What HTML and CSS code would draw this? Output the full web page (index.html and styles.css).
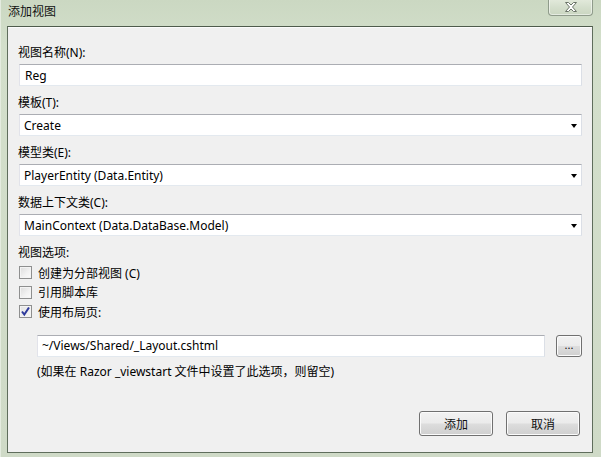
FILE: index.html
```html
<!DOCTYPE html>
<html>
<head>
<meta charset="utf-8">
<link rel="stylesheet" href="styles.css">
</head>
<body>
<div class="window">
  <div class="titlebar">
    <span class="title">添加视图</span>
    <div class="close">
      <svg width="16" height="12" viewBox="0 0 16 12"><path d="M2.5 1.5 L5.5 1.5 L8 4 L10.5 1.5 L13.5 1.5 L9.5 6 L13.5 10.5 L10.5 10.5 L8 8 L5.5 10.5 L2.5 10.5 L6.5 6 Z" fill="#fff" stroke="#6b7468" stroke-width="1" stroke-linejoin="round"/></svg>
    </div>
  </div>
  <div class="client">
    <div class="group">
      <div class="label">视图名称(N):</div>
      <div class="field">Reg</div>
    </div>
    <div class="group">
      <div class="label">模板(T):</div>
      <div class="field select"><span>Create</span><i class="arrow"></i></div>
    </div>
    <div class="group">
      <div class="label">模型类(E):</div>
      <div class="field select"><span>PlayerEntity (Data.Entity)</span><i class="arrow"></i></div>
    </div>
    <div class="group">
      <div class="label">数据上下文类(C):</div>
      <div class="field select"><span>MainContext (Data.DataBase.Model)</span><i class="arrow"></i></div>
    </div>
    <div class="label options">视图选项:</div>
    <div class="check"><span class="box"></span><span>创建为分部视图 (C)</span></div>
    <div class="check"><span class="box"></span><span>引用脚本库</span></div>
    <div class="check"><span class="box checked"><svg width="11" height="11" viewBox="0 0 11 11"><path d="M2 5.5 L4.3 8.5 L9 1.5" fill="none" stroke="#2e3a9c" stroke-width="2"/></svg></span><span>使用布局页:</span></div>
    <div class="layout-row">
      <div class="field layout">~/Views/Shared/_Layout.cshtml</div>
      <div class="btn small">...</div>
    </div>
    <div class="note">(如果在 Razor _viewstart 文件中设置了此选项，则留空)</div>
    <div class="actions">
      <div class="btn">添加</div>
      <div class="btn">取消</div>
    </div>
  </div>
</div>
</body>
</html>
```
FILE: styles.css
```css
html, body {
  margin: 0;
  padding: 0;
}
body {
  width: 601px;
  height: 457px;
  overflow: hidden;
  background: #cfdbc6;
  font-family: "Noto Sans", "Noto Sans CJK SC", sans-serif;
  font-size: 12px;
  color: #000;
}
.window {
  width: 601px;
  height: 457px;
  display: flex;
  flex-direction: column;
  background: linear-gradient(180deg, #cbd8c2 0%, #d3dfcb 10%, #cfdac7 100%);
  box-shadow: inset 1px 0 0 #e4ebdf;
}
.titlebar {
  height: 26px;
  display: flex;
  align-items: flex-start;
  justify-content: space-between;
  flex-shrink: 0;
}
.title {
  margin-left: 8px;
  margin-top: 3px;
  line-height: 17px;
  font-size: 12px;
  color: #111;
}
.close {
  width: 45px;
  height: 17px;
  margin-right: 8px;
  margin-top: -1px;
  border: 1px solid #8f9b8b;
  border-top: none;
  border-radius: 0 0 4px 4px;
  background: linear-gradient(180deg, #e3eadc 0%, #d5dfcd 50%, #cad6c1 100%);
  box-shadow: inset 0 0 0 1px rgba(255,255,255,0.5);
  display: flex;
  align-items: center;
  justify-content: center;
  box-sizing: border-box;
}
.client {
  margin-left: 7px;
  width: 586px;
  height: 427px;
  box-sizing: border-box;
  border: 1px solid #5f6d5c;
  border-top-color: #4e5b4c;
  background: #f0f0f0;
  padding: 17px 10px 16px 10px;
  display: flex;
  flex-direction: column;
  box-shadow: inset 0 1px 0 #fbfbfb;
}
.group {
  display: flex;
  flex-direction: column;
  margin-bottom: 8px;
}
.label {
  height: 18px;
  line-height: 18px;
  margin-bottom: 2px;
}
.field {
  height: 22px;
  box-sizing: border-box;
  margin-left: 1px;
  background: #fff;
  border: 1px solid #e3e9ef;
  border-top-color: #abadb3;
  border-left-color: #e2e3ea;
  border-right-color: #dbdfe6;
  line-height: 20px;
  padding-left: 5px;
  padding-top: 1px;
  display: flex;
  align-items: center;
  justify-content: space-between;
}
.select {
  padding-left: 4px;
  padding-right: 4px;
}
.arrow {
  width: 0;
  height: 0;
  border-left: 3.5px solid transparent;
  border-right: 3.5px solid transparent;
  border-top: 4px solid #000;
  margin-right: 0;
}
.options {
  margin-bottom: 1px;
}
.check {
  height: 19.5px;
  display: flex;
  align-items: center;
  gap: 6px;
  margin-left: 1px;
}
.box {
  width: 13px;
  height: 13px;
  box-sizing: border-box;
  border: 1px solid #8e8f8f;
  background: linear-gradient(135deg, #dcdcdc 0%, #f2f2f2 60%, #fbfbfb 100%);
  box-shadow: inset 0 0 0 1px #f4f4f4;
  display: flex;
  align-items: center;
  justify-content: center;
}
.box.checked {
  background: linear-gradient(135deg, #e4e4e4 0%, #f6f6f6 100%);
}
.layout-row {
  display: flex;
  margin-top: 13px;
  margin-left: 18px;
  gap: 11px;
}
.layout {
  width: 508px;
  margin-left: 1px;
  padding-left: 4px;
}
.btn {
  width: 74px;
  height: 25px;
  box-sizing: border-box;
  border: 1px solid #707070;
  border-radius: 3px;
  background: linear-gradient(180deg, #f2f2f2 0%, #ebebeb 48%, #dddddd 52%, #cfcfcf 100%);
  box-shadow: inset 0 0 0 1px #fbfbfb;
  display: flex;
  align-items: center;
  justify-content: center;
  color: #111;
}
.btn.small {
  width: 26px;
  height: 22px;
  font-size: 11px;
  line-height: 10px;
  padding-bottom: 2px;
}
.note {
  margin-left: 19px;
  margin-top: 6px;
  height: 18px;
  line-height: 18px;
}
.actions {
  margin-top: auto;
  display: flex;
  justify-content: flex-end;
  gap: 13px;
  padding-right: 2px;
}
```
